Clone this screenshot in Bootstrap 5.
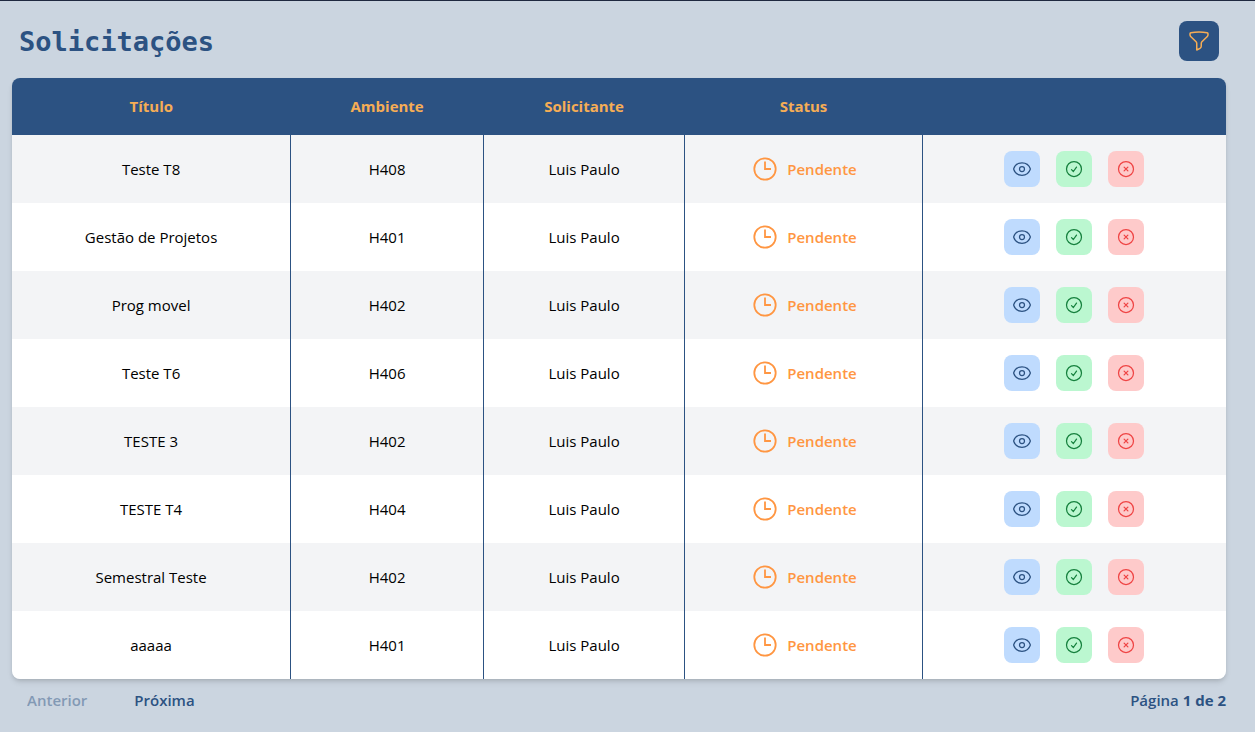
<!DOCTYPE html>
<html lang="pt-BR">
<head>
<meta charset="utf-8">
<meta name="viewport" content="width=device-width, initial-scale=1">
<title>Solicitações</title>
<link href="https://cdn.jsdelivr.net/npm/bootstrap@5.3.0/dist/css/bootstrap.min.css" rel="stylesheet">
<style>
  body { background: #cbd5e0; color: #000; font-family: "Open Sans", "Noto Sans", sans-serif; font-size: 15px; line-height: 24px; border-top: 1px solid #1f2940; }
  .page-shell { padding: 20px 29px 0 12px; }
  .page-head { padding: 0 7px; margin-bottom: 17px; }
  .page-title { font-family: "DejaVu Sans Mono", monospace; font-size: 27px; line-height: 38px; padding-top: 2px; font-weight: 700; color: #2c5282; }
  .icon { display: block; fill: none; stroke: currentColor; stroke-width: 1.5; stroke-linecap: round; stroke-linejoin: round; }
  .btn-filter { --bs-btn-bg: #2c5282; --bs-btn-color: #f6ad55; --bs-btn-hover-bg: #2a4365; --bs-btn-hover-color: #f6ad55; padding: 7px; border-radius: 8px; }
  .requests-box { border-radius: 8px; box-shadow: 0 4px 6px -1px rgba(0,0,0,.1), 0 2px 4px -1px rgba(0,0,0,.12); }
  .requests { table-layout: fixed; --bs-table-bg: transparent; }
  .requests th { height: 57px; padding: 0 16px 2px; background: #2c5282; color: #f6ad55; font-weight: 700; border: 0; vertical-align: middle; }
  .requests td { height: 68px; padding: 0 16px; border: 0; background: #fff; color: #000; }
  .requests tbody tr:nth-child(odd) td { background: #f3f4f6; }
  .requests td:not(:last-child) { border-right: 1px solid #2c5282; }
  .status { color: #ff9642; font-weight: 600; gap: 10px; padding-left: 3px; }
  .status .icon { stroke-width: 1.8; stroke-linecap: butt; stroke-linejoin: miter; }
  .btn-act { padding: 7px; border-radius: 8px; }
  .btn-view { --bs-btn-bg: #bfdbfe; --bs-btn-color: #2c5282; --bs-btn-hover-bg: #93c5fd; }
  .btn-approve { --bs-btn-bg: #bbf7d0; --bs-btn-color: #15803d; --bs-btn-hover-bg: #86efac; }
  .btn-reject { --bs-btn-bg: #fecaca; --bs-btn-color: #ef4444; --bs-btn-hover-bg: #fca5a5; }
  .pager { color: #2c5282; margin-top: 9px; font-weight: 600; }
  .pager strong { font-weight: 700; }
  .btn-page { --bs-btn-color: #2c5282; --bs-btn-disabled-color: #2c5282; --bs-btn-disabled-opacity: .45; --bs-btn-disabled-border-color: transparent; padding: 0; margin-left: 15px; margin-right: 32px; border: 0; font-size: 15px; line-height: 24px; font-weight: 600; }
</style>
</head>
<body>
<svg class="d-none" aria-hidden="true">
  <symbol id="i-clock" viewBox="0 0 24 24"><circle cx="12" cy="12" r="10.7"/><path d="M12 4.5v7.5h6"/></symbol>
  <symbol id="i-eye" viewBox="0 0 24 24"><path d="M2.036 12.322a1.012 1.012 0 010-.639C3.423 7.51 7.36 4.5 12 4.5c4.638 0 8.573 3.007 9.963 7.178.07.207.07.431 0 .639C20.577 16.49 16.64 19.5 12 19.5c-4.638 0-8.573-3.007-9.963-7.178z"/><path d="M15 12a3 3 0 11-6 0 3 3 0 016 0z"/></symbol>
  <symbol id="i-check" viewBox="0 0 24 24"><path d="M9 12.75L11.25 15 15 9.75M21 12a9 9 0 11-18 0 9 9 0 0118 0z"/></symbol>
  <symbol id="i-x" viewBox="0 0 24 24"><path d="M9.75 9.75l4.5 4.5m0-4.5l-4.5 4.5M21 12a9 9 0 11-18 0 9 9 0 0118 0z"/></symbol>
</svg>

<main class="page-shell">
  <header class="page-head d-flex justify-content-between align-items-center">
    <h1 class="page-title mb-0">Solicitações</h1>
    <button type="button" class="btn btn-filter" aria-label="Filtrar">
      <svg class="icon" width="24" height="24" viewBox="0 0 24 24"><path d="M12 3c2.755 0 5.455.232 8.083.678.533.09.917.556.917 1.096v1.044a2.25 2.25 0 01-.659 1.591l-5.432 5.432a2.25 2.25 0 00-.659 1.591v2.927a2.25 2.25 0 01-1.244 2.013L9.75 21v-6.568a2.25 2.25 0 00-.659-1.591L3.659 7.409A2.25 2.25 0 013 5.818V4.774c0-.54.384-1.006.917-1.096A48.32 48.32 0 0112 3z"/></svg>
    </button>
  </header>

  <div class="requests-box overflow-hidden">
    <table class="table requests text-center align-middle mb-0">
      <colgroup><col style="width:22.95%"><col style="width:15.9%"><col style="width:16.55%"><col style="width:19.6%"><col style="width:25%"></colgroup>
      <thead>
        <tr><th scope="col">Título</th><th scope="col">Ambiente</th><th scope="col">Solicitante</th><th scope="col">Status</th><th></th></tr>
      </thead>
      <tbody id="rows"></tbody>
    </table>
  </div>

  <nav class="pager d-flex justify-content-between align-items-center" aria-label="Paginação">
    <div class="d-flex">
      <button type="button" class="btn btn-page" disabled>Anterior</button>
      <button type="button" class="btn btn-page">Próxima</button>
    </div>
    <span>Página <strong>1 de 2</strong></span>
  </nav>
</main>

<script src="https://cdn.jsdelivr.net/npm/bootstrap@5.3.0/dist/js/bootstrap.bundle.min.js"></script>
<script>
  const requests = [
    ["Teste T8", "H408"], ["Gestão de Projetos", "H401"], ["Prog movel", "H402"], ["Teste T6", "H406"],
    ["TESTE 3", "H402"], ["TESTE T4", "H404"], ["Semestral Teste", "H402"], ["aaaaa", "H401"]
  ];
  const icon = (name, size) => `<svg class="icon" width="${size}" height="${size}"><use href="#i-${name}"/></svg>`;
  const action = (kind, name, label) => `<button type="button" class="btn btn-act btn-${kind}" aria-label="${label}">${icon(name, 20)}</button>`;
  document.getElementById("rows").innerHTML = requests.map(([title, room]) => `
    <tr>
      <td>${title}</td><td>${room}</td><td>Luis Paulo</td>
      <td><div class="status d-flex justify-content-center align-items-center">${icon("clock", 24)}<span>Pendente</span></div></td>
      <td><div class="d-flex justify-content-center gap-3">
        ${action("view", "eye", "Visualizar")}${action("approve", "check", "Aprovar")}${action("reject", "x", "Recusar")}
      </div></td>
    </tr>`).join("");
</script>
</body>
</html>
